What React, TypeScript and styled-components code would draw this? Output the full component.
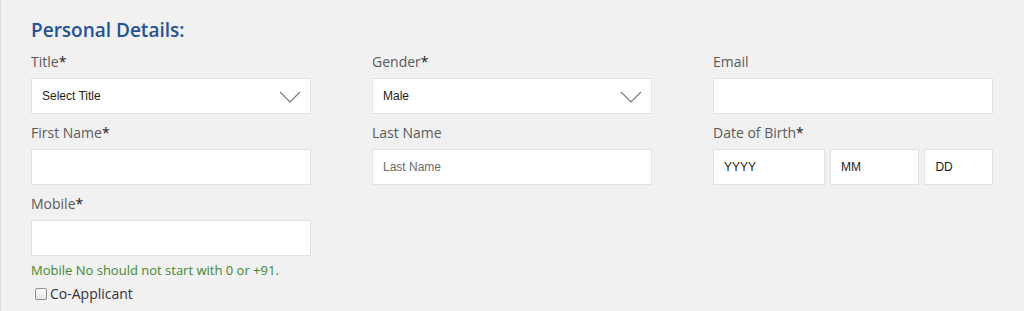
import styled, { createGlobalStyle } from "styled-components";

const GlobalStyle = createGlobalStyle`
  html, body {
    margin: 0;
    padding: 0;
    background: #f1f1f1;
  }
  * {
    box-sizing: border-box;
  }
`;

const StyledPage = styled.div`
  width: 1024px;
  height: 311px;
  overflow: hidden;
  background: #f1f1f1;
  border-left: 1px solid #dcdcdc;
  padding: 16px 0 0 30px;
  font-family: "Open Sans", sans-serif;
`;

const StyledHeading = styled.h2`
  margin: 0 0 8px;
  font-size: 19px;
  font-weight: 600;
  line-height: 28px;
  color: #22529a;
`;

const StyledGrid = styled.div`
  display: grid;
  grid-template-columns: repeat(3, 280px);
  column-gap: 61px;
  row-gap: 9px;
`;

const StyledField = styled.div`
  display: flex;
  flex-direction: column;
`;

const StyledLabel = styled.label`
  font-size: 14px;
  line-height: 20px;
  color: #5a5a5a;
  margin-bottom: 6px;
`;

const StyledStar = styled.span`
  color: #222;
`;

const StyledInputBox = styled.div<{ $width?: string }>`
  position: relative;
  display: flex;
  align-items: center;
  height: 36px;
  width: ${(p) => p.$width || "100%"};
  background: #fff;
  border: 1px solid #e2e2e2;
  padding: 0 10px;
  font-family: "Liberation Sans", Arial, sans-serif;
  font-size: 12px;
  color: ${(p) => (p.theme.placeholder ? "#6b6b6b" : "#1e1e1e")};
`;

const StyledDateRow = styled.div`
  display: flex;
  gap: 5px;
`;

const StyledChevron = styled.svg`
  position: absolute;
  right: 9px;
  top: 12px;
`;

const StyledHelp = styled.div`
  margin-top: 5px;
  font-size: 13px;
  line-height: 18px;
  color: #3d8a2f;
`;

const StyledCheckRow = styled.label`
  display: flex;
  align-items: center;
  gap: 3px;
  margin-top: 5px;
  margin-left: 4px;
  font-size: 14px;
  line-height: 20px;
  color: #333;
`;

const StyledCheckbox = styled.span`
  display: inline-block;
  width: 12px;
  height: 12px;
  border: 1px solid #8f8f8f;
  border-radius: 2px;
  background: linear-gradient(#fdfdfd, #e6e6e6);
`;

const Chevron = () => (
  <StyledChevron width="22" height="12" viewBox="0 0 22 12">
    <path d="M1 1 L11 11 L21 1" fill="none" stroke="#7a7a7a" strokeWidth="1.2" />
  </StyledChevron>
);

interface IFieldProps {
  label: string;
  required?: boolean;
  children?: React.ReactNode;
}

const Field = ({ label, required, children }: IFieldProps) => (
  <StyledField>
    <StyledLabel>
      {label}
      {required && <StyledStar>*</StyledStar>}
    </StyledLabel>
    {children}
  </StyledField>
);

export default function App() {
  return (
    <>
      <GlobalStyle />
      <StyledPage>
        <StyledHeading>Personal Details:</StyledHeading>
        <StyledGrid>
          <Field label="Title" required>
            <StyledInputBox>
              Select Title
              <Chevron />
            </StyledInputBox>
          </Field>
          <Field label="Gender" required>
            <StyledInputBox>
              Male
              <Chevron />
            </StyledInputBox>
          </Field>
          <Field label="Email">
            <StyledInputBox />
          </Field>

          <Field label="First Name" required>
            <StyledInputBox />
          </Field>
          <Field label="Last Name">
            <StyledInputBox theme={{ placeholder: true }}>Last Name</StyledInputBox>
          </Field>
          <Field label="Date of Birth" required>
            <StyledDateRow>
              <StyledInputBox $width="113px">YYYY</StyledInputBox>
              <StyledInputBox $width="90px">MM</StyledInputBox>
              <StyledInputBox $width="69px">DD</StyledInputBox>
            </StyledDateRow>
          </Field>

          <Field label="Mobile" required>
            <StyledInputBox />
            <StyledHelp>Mobile No should not start with 0 or +91.</StyledHelp>
            <StyledCheckRow>
              <StyledCheckbox />
              Co-Applicant
            </StyledCheckRow>
          </Field>
        </StyledGrid>
      </StyledPage>
    </>
  );
}
